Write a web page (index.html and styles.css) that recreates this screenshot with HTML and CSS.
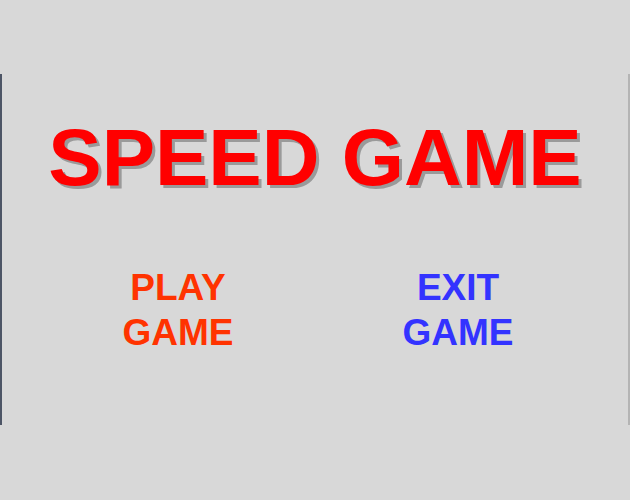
FILE: index.html
```html
<!DOCTYPE html>
<html lang="en">
<head>
  <meta charset="UTF-8">
  <title>Speed Game</title>
  <meta name="viewport" content="width=device-width, initial-scale=1.0">
  <link rel="stylesheet" href="styles.css">
</head>
<body>

  <div class="stage">
    <!-- title -->
    <h1 class="title">SPEED GAME</h1>

    <!-- menu -->
    <div class="menu">
      <button class="menu-btn play-btn">PLAY<br>GAME</button>
      <button class="menu-btn exit-btn">EXIT<br>GAME</button>
    </div>
  </div>

</body>
</html>
```

FILE: styles.css
```css
/* page */
body {
  margin: 0;
  background: #d8d8d8;
  font-family: 'Liberation Sans', Arial, sans-serif;
}

/* game area */
.stage {
  margin-top: 74px;
  height: 351px;
  border-left: 2px solid #4d5566;
  border-right: 2px solid #b4b4b4;
  box-sizing: border-box;
  text-align: center;
}

/* big red title */
.title {
  margin: 0;
  padding-top: 38px;
  font-size: 80px;
  line-height: 92px;
  font-weight: bold;
  color: #ff0000;
  text-shadow: 3px 3px 0 #9a9a9a;
}

/* menu buttons */
.menu {
  display: flex;
  justify-content: center;
  margin-top: 61px;
  padding-left: 6px;
}

.menu-btn {
  width: 280px;
  padding: 0;
  background: none;
  border: none;
  font-family: inherit;
  font-size: 37px;
  line-height: 45px;
  font-weight: bold;
  cursor: pointer;
}

.play-btn {
  color: #ff3300;
}

.exit-btn {
  color: #3333ff;
}
```
